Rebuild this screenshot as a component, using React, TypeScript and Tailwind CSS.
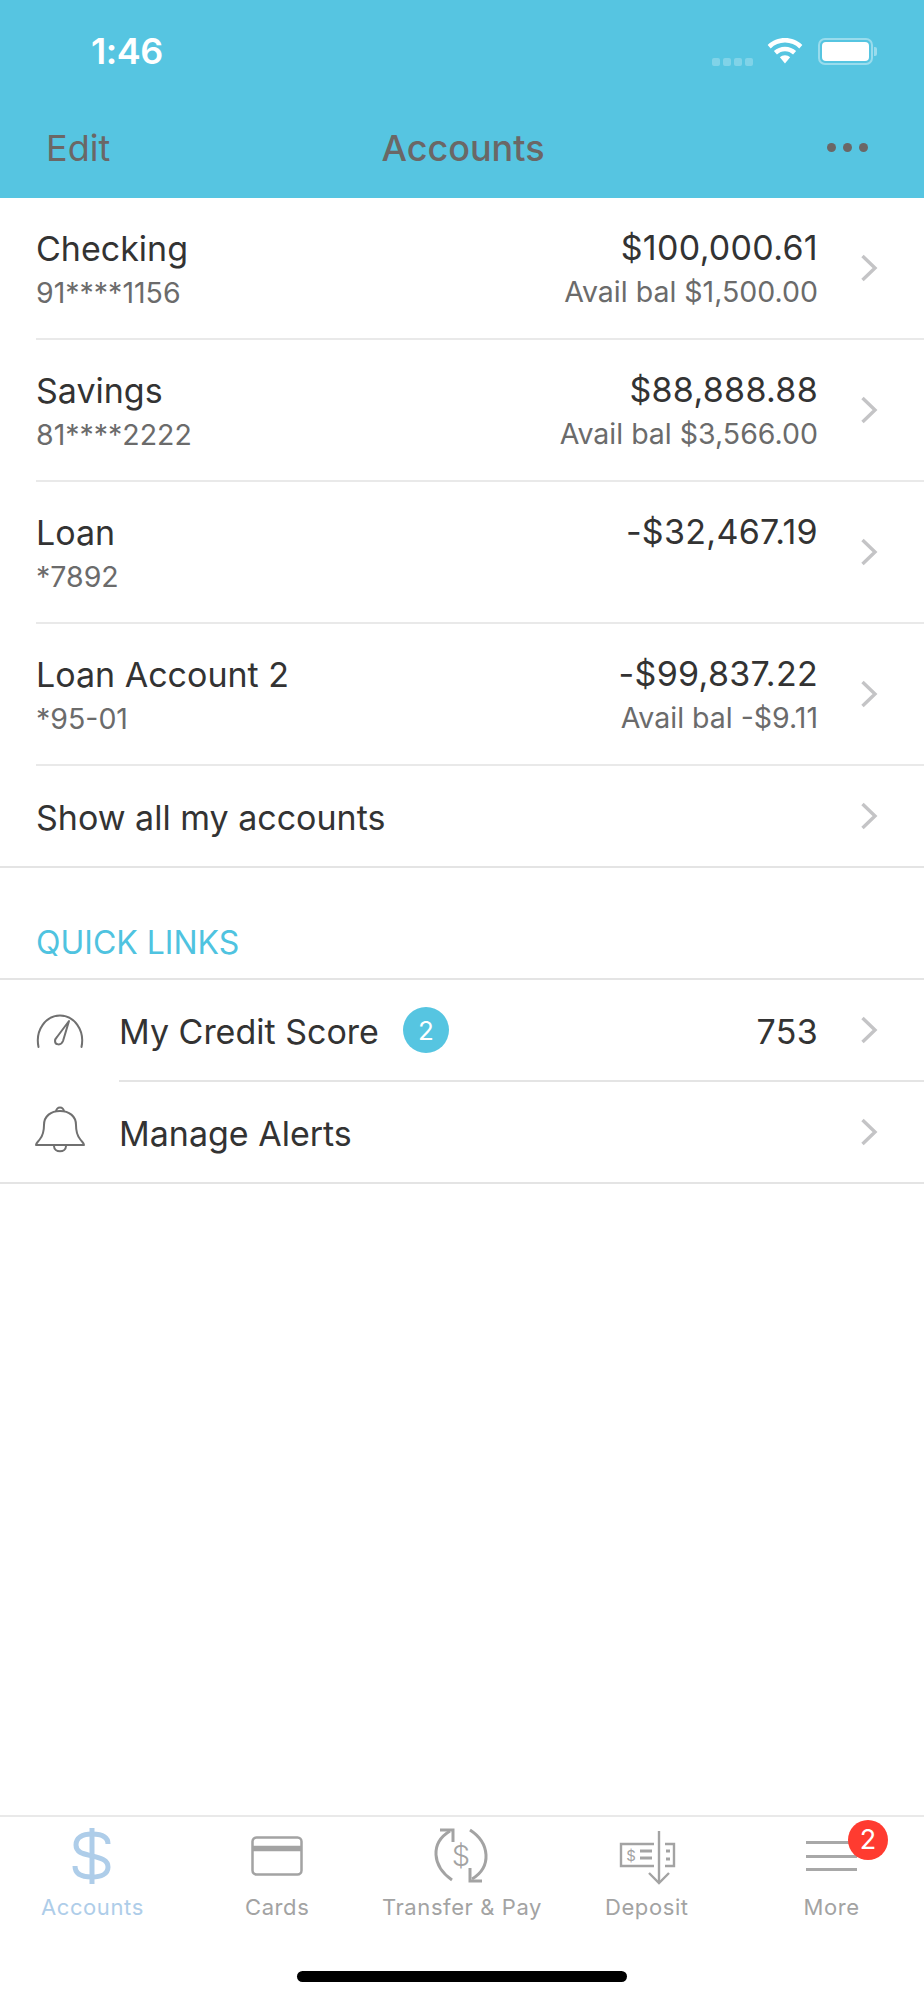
import type { ReactNode } from 'react';

const accounts = [
  { name: 'Checking', mask: '91****1156', balance: '$100,000.61', avail: 'Avail bal $1,500.00' },
  { name: 'Savings', mask: '81****2222', balance: '$88,888.88', avail: 'Avail bal $3,566.00' },
  { name: 'Loan', mask: '*7892', balance: '-$32,467.19', avail: '' },
  { name: 'Loan Account 2', mask: '*95-01', balance: '-$99,837.22', avail: 'Avail bal -$9.11' },
];

function Chevron() {
  return (
    <svg viewBox="0 0 18 28" className="h-[28px] w-[18px] shrink-0" fill="none" stroke="#c4c4c6" strokeWidth="3.4">
      <path d="M2.5 2 L15 14 L2.5 26" />
    </svg>
  );
}

function WifiIcon() {
  return (
    <svg viewBox="1 1 34 25.500" className="h-[26px] w-[36px]" fill="#fff">
      <path d="M18 1C11.500 1 5.600 3.500 1 7.800l3 3.400C7.700 7.600 12.600 5.500 18 5.500s10.300 2.100 14 5.700l3-3.400C30.400 3.500 24.500 1 18 1z" />
      <path d="M18 9.500c-4.200 0-8 1.600-10.900 4.300l3 3.400c2.100-2 4.900-3.200 7.900-3.200s5.800 1.200 7.900 3.200l3-3.400C26 11.100 22.200 9.500 18 9.500z" />
      <path d="M18 18c-2 0-3.800.8-5 2l5 6 5-6c-1.200-1.200-3-2-5-2z" />
    </svg>
  );
}

function StatusBar() {
  return (
    <div className="flex h-[100px] items-start justify-between pl-[91px] pr-[47px] pt-[29px]">
      <span className="text-[36px] leading-[44px] font-semibold tracking-[-0.5px] text-white">1:46</span>
      <div className="flex items-center pt-[7px]">
        <div className="mt-[22px] mr-[14px] flex gap-[3px]">
          {[0, 1, 2, 3].map((n) => (
            <div key={n} className="h-[8px] w-[8px] rounded-[2px] bg-white/25" />
          ))}
        </div>
        <WifiIcon />
        <div className="ml-[15px] flex items-center">
          <div className="h-[27px] w-[55px] rounded-[7px] border-2 border-white/40 p-[2px]">
            <div className="h-full w-full rounded-[4px] bg-white" />
          </div>
          <div className="ml-[1px] h-[9px] w-[3px] rounded-r-[2px] bg-white/40" />
        </div>
      </div>
    </div>
  );
}

function NavBar() {
  return (
    <div className="flex h-[98px] items-start pl-[46px] pr-[56px] pt-[28px]">
      <span className="flex-1 text-[36px] leading-[40px] text-[#6b6766]">Edit</span>
      <span className="ml-[12px] text-[36px] leading-[40px] font-medium text-[#6b6766]">Accounts</span>
      <div className="flex flex-1 justify-end gap-[7px] pt-[15px]">
        {[0, 1, 2].map((n) => (
          <div key={n} className="h-[9px] w-[9px] rounded-full bg-[#6b6766]" />
        ))}
      </div>
    </div>
  );
}

function AccountRow({ name, mask, balance, avail }: (typeof accounts)[number]) {
  return (
    <div className="pl-[36px]">
      <div className="flex h-[142px] items-center border-b-2 border-[#e9e9e9] pr-[46px]">
        <div className="flex-1 pt-[5px]">
          <div className="text-[34px] leading-[44px] text-[#333]">{name}</div>
          <div className="text-[28.500px] leading-[44px] text-[#6b6b6b]">{mask}</div>
        </div>
        <div className="mr-[42px] self-start pt-[28px] text-right">
          <div className="text-[34px] leading-[44px] tracking-[0.3px] text-[#333]">{balance}</div>
          {avail && <div className="text-[28.500px] leading-[44px] text-[#6b6b6b]">{avail}</div>}
        </div>
        <Chevron />
      </div>
    </div>
  );
}

function GaugeIcon() {
  return (
    <svg viewBox="0 0 60 50" className="h-[50px] w-[60px]" fill="none" stroke="#707070" strokeWidth="2">
      <path d="M8.500 41 C5 24 16 9.500 30 9.500 C44 9.500 55 24 51.500 41" strokeLinecap="round" />
      <path d="M39 15 L33 35 C31 40 25 39 25 35 C25 33 26 32 27 31 Z" strokeLinejoin="round" />
    </svg>
  );
}

function BellIcon() {
  return (
    <svg viewBox="0 0 60 60" className="h-[60px] w-[60px]" fill="none" stroke="#707070" strokeWidth="2" strokeLinejoin="round">
      <path d="M26 10 C26 4 34 4 34 10" />
      <path d="M6 43 C6 41 8 40 10 37 C14 32 14 27 14 23 C14 14 21 9 30 9 C39 9 46 14 46 23 C46 27 46 32 50 37 C52 40 54 41 54 43 Z" />
      <path d="M24 44 C24 51 36 51 36 44" />
    </svg>
  );
}

function QuickLink({ icon, label, badge, value, inset }: { icon: ReactNode; label: string; badge?: string; value?: string; inset?: boolean }) {
  return (
    <div className={`flex h-[102px] items-center ${inset ? '' : 'border-b-2 border-[#e4e4e4]'}`}>
      <div className="flex w-[119px] shrink-0 justify-center">{icon}</div>
      <div className={`flex h-full flex-1 items-center pr-[46px] ${inset ? 'border-b-2 border-[#e4e4e4]' : ''}`}>
        <span className="pt-[2px] text-[34px] text-[#333]">{label}</span>
        {badge && (
          <div className="ml-[24px] flex h-[46px] w-[46px] items-center justify-center rounded-full bg-[#56c5e1] text-[26px] text-white">
            {badge}
          </div>
        )}
        <div className="flex-1" />
        {value && <span className="mr-[42px] pt-[2px] text-[34px] tracking-[0.3px] text-[#333]">{value}</span>}
        <Chevron />
      </div>
    </div>
  );
}

function DollarTab() {
  return (
    <svg viewBox="0 0 40 58" className="h-[58px] w-[40px]" fill="none" stroke="#aecde9" strokeWidth="5">
      <path d="M20 1 V57" />
      <path d="M36 17 C36 9 29 7 20 7 C10 7 4 11 4 18 C4 26 12 27 20 29 C29 31 36 33 36 40 C36 47 29 50 20 50 C10 50 3 47 3 39" />
    </svg>
  );
}

function CardTab() {
  return (
    <svg viewBox="0 0 52 40" className="h-[40px] w-[52px]" fill="none" stroke="#a3a3a3" strokeWidth="2.5">
      <rect x="1.500" y="1.500" width="49" height="37" rx="4" />
      <path d="M1.500 12.500 H50.500" strokeWidth="5.500" />
    </svg>
  );
}

function TransferTab() {
  return (
    <svg viewBox="0 0 84 70" className="h-[70px] w-[84px]" fill="none" stroke="#a3a3a3" strokeWidth="3">
      <path d="M32 59 C12 45 10 22 30 10" />
      <path d="M20 9 H33 V21" />
      <path d="M50 9 C70 22 72 46 52 58" />
      <path d="M50 47 V60 H62" />
      <text x="41" y="45" textAnchor="middle" fontSize="29" fontWeight="300" fill="#a3a3a3" stroke="none" fontFamily="Inter, sans-serif">$</text>
    </svg>
  );
}

function DepositTab() {
  return (
    <svg viewBox="0 0 70 60" className="h-[60px] w-[70px]" fill="none" stroke="#a3a3a3" strokeWidth="2.400">
      <path d="M42 18 H9 V40 H42" />
      <path d="M53 18 H62 V40 H53" />
      <path d="M47 5 V56" />
      <path d="M37 47 L47 57 L57 47" />
      <path d="M28 25 H40 M28 32 H40" strokeWidth="3" />
      <path d="M54 25 H58 M54 33 H58" strokeWidth="3" />
      <text x="19" y="35" textAnchor="middle" fontSize="15" fill="#a3a3a3" stroke="none" fontFamily="Inter, sans-serif">$</text>
    </svg>
  );
}

function MoreTab() {
  return (
    <div className="relative">
      <div className="flex w-[51px] flex-col gap-[10.500px]">
        <div className="h-[3px] bg-[#a8a8a8]" />
        <div className="h-[3px] bg-[#a8a8a8]" />
        <div className="h-[3px] bg-[#a8a8a8]" />
      </div>
      <div className="absolute -right-[31px] -top-[21px] flex h-[40px] w-[40px] items-center justify-center rounded-full bg-[#ff3b30] text-[27px] text-white">
        2
      </div>
    </div>
  );
}

const tabs = [
  { label: 'Accounts', icon: <DollarTab />, active: true },
  { label: 'Cards', icon: <CardTab /> },
  { label: 'Transfer & Pay', icon: <TransferTab /> },
  { label: 'Deposit', icon: <DepositTab /> },
  { label: 'More', icon: <MoreTab /> },
];

function TabBar() {
  return (
    <div className="border-t-2 border-[#e9e9e9]">
      <div className="grid h-[110px] grid-cols-5">
        {tabs.map((tab) => (
          <div key={tab.label} className="flex flex-col items-center">
            <div className="flex h-[78px] items-center justify-center">{tab.icon}</div>
            <span className={`-mt-[5px] whitespace-nowrap text-[22px] leading-[34px] tracking-[0.6px] ${tab.active ? 'text-[#aecde9]' : 'text-[#a3a3a3]'}`}>
              {tab.label}
            </span>
          </div>
        ))}
      </div>
      <div className="flex h-[73px] justify-center pt-[44px]">
        <div className="h-[11px] w-[330px] rounded-full bg-black" />
      </div>
    </div>
  );
}

export default function App() {
  return (
    <div className="flex min-h-[2000px] flex-col bg-white font-['Inter',sans-serif]">
      <header className="bg-[#56c5e1]">
        <StatusBar />
        <NavBar />
      </header>

      <main className="flex-1">
        {accounts.map((a) => (
          <AccountRow key={a.name} {...a} />
        ))}
        <div className="flex h-[102px] items-center border-b-2 border-[#e4e4e4] pl-[36px] pr-[46px]">
          <span className="flex-1 pt-[3px] text-[34px] text-[#333]">Show all my accounts</span>
          <Chevron />
        </div>

        {/* Quick links */}
        <div className="flex h-[112px] items-end border-b-2 border-[#e4e4e4] pb-[11px] pl-[36px]">
          <span className="text-[32px] text-[#4fc3e0]">QUICK LINKS</span>
        </div>
        <QuickLink icon={<GaugeIcon />} label="My Credit Score" badge="2" value="753" inset />
        <QuickLink icon={<BellIcon />} label="Manage Alerts" />
      </main>

      <TabBar />
    </div>
  );
}
